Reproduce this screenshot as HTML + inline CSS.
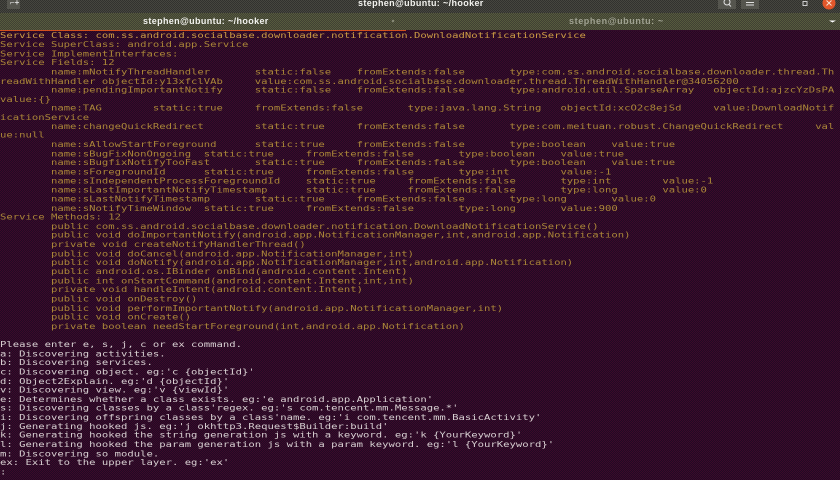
<!DOCTYPE html>
<html><head><meta charset="utf-8"><style>
html,body{margin:0;padding:0;width:840px;height:480px;overflow:hidden;background:#300a28}
.t{position:absolute;font-family:"Liberation Sans",sans-serif;font-weight:bold;font-size:9px;letter-spacing:.36px;white-space:pre;line-height:10px}
#top{position:absolute;left:0;top:0;width:840px;height:13px;background:repeating-conic-gradient(#46463f 0 25%,#32322f 0 50%) 0 0/2px 2px}
#tabs{position:absolute;left:0;top:13px;width:840px;height:17px;background:repeating-conic-gradient(#575a3e 0 25%,#3f4133 0 50%) 0 0/2px 2px}
#line{position:absolute;left:0;top:30px;width:406px;height:1px;background:#d2501e}
#bg{position:absolute;left:0;top:31px;width:840px;height:449px;background:repeating-conic-gradient(#3c0a29 0 25%,#210a25 0 50%) 0 0/2px 2px}
pre{position:absolute;left:0;margin:0;font-family:"DejaVu Sans Mono",monospace;font-size:10.58px;line-height:11.64px;tab-size:8;white-space:pre;transform-origin:0 0;transform:scaleY(.78);filter:blur(.35px)}
.y{color:#aa8638}.f{color:#cc9c44}.w{color:#d8d0d2}
.b{position:absolute;background:#55554e;top:0;height:9px}
</style></head><body>
<div id="top"></div><div id="tabs"></div><div id="line"></div><div id="bg"></div>
<div class="b" style="left:7px;width:13px"></div>
<div class="t" style="left:10px;top:-2px;font-size:8px;color:#ddd;letter-spacing:0">⌐+</div>
<div class="t" style="left:358px;top:-2px;color:#f2f2ee">stephen@ubuntu: ~/hooker</div>
<div class="t" style="left:143px;top:16px;color:#f2f2ee">stephen@ubuntu: ~/hooker</div>
<div class="t" style="left:569px;top:16px;color:#a0a292;letter-spacing:.6px">stephen@ubuntu: ~</div>
<div class="b" style="left:718px;width:18px"></div>
<div class="b" style="left:741px;width:18px"></div>
<svg style="position:absolute;left:0;top:0" width="840" height="31">
<circle cx="727" cy="2" r="3" fill="none" stroke="#e0e0e0" stroke-width="1"/><path d="M729 4.500l2 2" stroke="#e0e0e0"/>
<path d="M746 2.500h8M746 5h8" stroke="#e0e0e0"/>
<rect x="803" y="1.500" width="4" height="4" fill="none" stroke="#ccc"/>
<circle cx="829" cy="3" r="6.500" fill="#e2562a"/><path d="M826.500 .5l5 5M831.500 .5l-5 5" stroke="#f4e0d0" stroke-width="1"/>
<path d="M392 20l2 2M394 20l-2 2" stroke="#8a8c78"/>
<path d="M829 20.500h7l-3.500 2z" fill="#fff"/>
<path d="M216 353h4M218 353v7M216 360h4" stroke="#d8d0d0" fill="none"/>
</svg>
<pre class="f" style="top:31.6px">Service Class: com.ss.android.socialbase.downloader.notification.DownloadNotificationService</pre>
<pre class="y" style="top:40.68px">Service SuperClass: android.app.Service
Service ImplementInterfaces:
Service Fields: 12
	name:mNotifyThreadHandler	static:false	fromExtends:false	type:com.ss.android.socialbase.downloader.thread.Th
readWithHandler objectId:y13xfclVAb	value:com.ss.android.socialbase.downloader.thread.ThreadWithHandler@34056200
	name:pendingImportantNotify	static:false	fromExtends:false	type:android.util.SparseArray	objectId:ajzcYzDsPA
value:{}
	name:TAG	static:true	fromExtends:false	type:java.lang.String	objectId:xcO2c8ejSd	value:DownloadNotif
icationService
	name:changeQuickRedirect	static:true	fromExtends:false	type:com.meituan.robust.ChangeQuickRedirect	val
ue:null
	name:sAllowStartForeground	static:true	fromExtends:false	type:boolean	value:true
	name:sBugFixNonOngoing	static:true	fromExtends:false	type:boolean	value:true
	name:sBugfixNotifyTooFast	static:true	fromExtends:false	type:boolean	value:true
	name:sForegroundId	static:true	fromExtends:false	type:int	value:-1
	name:sIndependentProcessForegroundId	static:true	fromExtends:false	type:int	value:-1
	name:sLastImportantNotifyTimestamp	static:true	fromExtends:false	type:long	value:0
	name:sLastNotifyTimestamp	static:true	fromExtends:false	type:long	value:0
	name:sNotifyTimeWindow	static:true	fromExtends:false	type:long	value:900
Service Methods: 12
	public com.ss.android.socialbase.downloader.notification.DownloadNotificationService()
	public void doImportantNotify(android.app.NotificationManager,int,android.app.Notification)
	private void createNotifyHandlerThread()
	public void doCancel(android.app.NotificationManager,int)
	public void doNotify(android.app.NotificationManager,int,android.app.Notification)
	public android.os.IBinder onBind(android.content.Intent)
	public int onStartCommand(android.content.Intent,int,int)
	private void handleIntent(android.content.Intent)
	public void onDestroy()
	public void performImportantNotify(android.app.NotificationManager,int)
	public void onCreate()
	private boolean needStartForeground(int,android.app.Notification)</pre>
<pre class="w" style="top:341px">Please enter e, s, j, c or ex command.
a: Discovering activities.
b: Discovering services.
c: Discovering object. eg:'c {objectId}'
d: Object2Explain. eg:'d {objectId}'
v: Discovering view. eg:'v {viewId}'
e: Determines whether a class exists. eg:'e android.app.Application'
s: Discovering classes by a class'regex. eg:'s com.tencent.mm.Message.*'
i: Discovering offspring classes by a class'name. eg:'i com.tencent.mm.BasicActivity'
j: Generating hooked js. eg:'j okhttp3.Request$Builder:build'
k: Generating hooked the string generation js with a keyword. eg:'k {YourKeyword}'
l: Generating hooked the param generation js with a param keyword. eg:'l {YourKeyword}'
m: Discovering so module.
ex: Exit to the upper layer. eg:'ex'
:</pre>
</body></html>
